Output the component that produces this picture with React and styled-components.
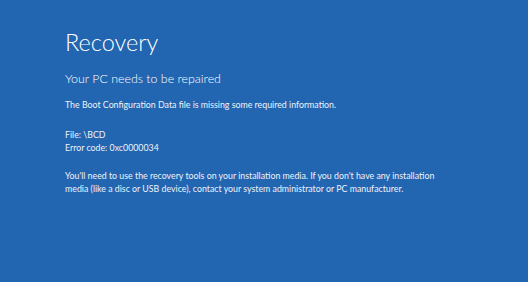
import React from 'react'
import styled, { createGlobalStyle } from 'styled-components'

const GlobalStyle = createGlobalStyle`
  html, body {
    margin: 0;
    padding: 0;
    background: #2265b1;
  }
`

const Screen = styled.main`
  width: 528px;
  height: 282px;
  box-sizing: border-box;
  padding: 28px 0 0 65px;
  background: #2265b1;
  color: #ffffff;
  font-family: Lato, 'Open Sans', sans-serif;
  overflow: hidden;
`

const Title = styled.h1`
  margin: 0;
  font-size: 23.5px;
  line-height: 28px;
  font-weight: 300;
`

const Subtitle = styled.h2`
  margin: 15px 0 0;
  font-size: 12.4px;
  line-height: 16px;
  font-weight: 300;
  color: #ffffff;
`

const Text = styled.p`
  margin: ${p => p.$gap || 0}px 0 0;
  font-size: 8.8px;
  line-height: 13px;
  font-weight: 400;
  color: #eef3fa;
  max-width: ${p => p.$wide ? 380 : 460}px;
`

export default function App() {
  return (
    <>
      <GlobalStyle />
      <Screen>
        <Title>Recovery</Title>
        <Subtitle>Your PC needs to be repaired</Subtitle>
        <Text $gap={10.8}>
          The Boot Configuration Data file is missing some required information.
        </Text>
        <Text $gap={17.4}>File: \BCD</Text>
        <Text>Error code: 0xc0000034</Text>
        <Text $gap={14.4} $wide>
          You'll need to use the recovery tools on your installation media. If you
          don't have any installation media (like a disc or USB device), contact your
          system administrator or PC manufacturer.
        </Text>
      </Screen>
    </>
  )
}
